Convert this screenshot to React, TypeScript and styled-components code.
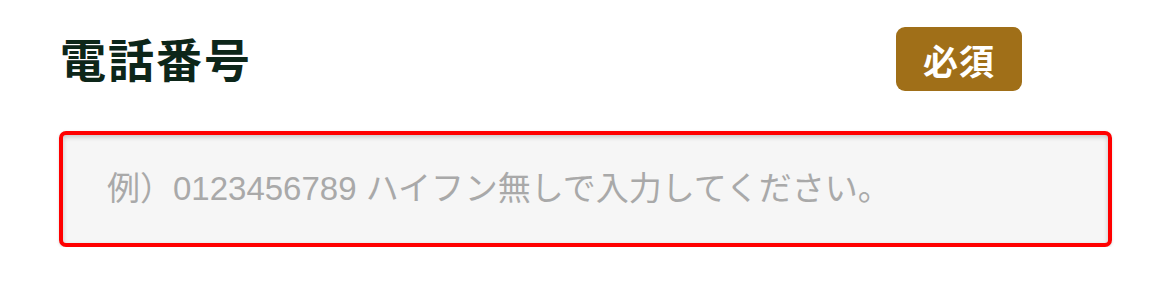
import styled, { createGlobalStyle } from 'styled-components'

const GlobalStyle = createGlobalStyle`
  html, body {
    margin: 0;
    padding: 0;
    background: #ffffff;
  }
  body {
    font-family: 'Noto Sans CJK JP', 'Noto Sans', sans-serif;
  }
`

const Field = styled.div`
  width: 1053px;
  padding: 27px 0 0 59px;
`

const FieldHeader = styled.div`
  display: flex;
  align-items: center;
  justify-content: space-between;
  width: 963px;
  height: 64px;
`

const FieldLabel = styled.label`
  font-size: 46px;
  font-weight: 700;
  line-height: 64px;
  color: #0d2619;
  letter-spacing: 2px;
  margin-left: 1px;
  margin-top: -4px;
`

const RequiredBadge = styled.span`
  display: flex;
  align-items: center;
  justify-content: center;
  width: 126px;
  height: 64px;
  border-radius: 9px;
  background: #a06f18;
  color: #ffffff;
  font-size: 35px;
  font-weight: 700;
  letter-spacing: 1px;
`

const PhoneInput = styled.input`
  display: block;
  box-sizing: border-box;
  width: 1053px;
  height: 116px;
  margin-top: 40px;
  padding: 0 0 0 44px;
  border: 4px solid #ff0000;
  border-radius: 7px;
  background: #f6f6f6;
  box-shadow: inset 0 2px 5px rgba(0, 0, 0, 0.2), 0 1px 3px rgba(0, 0, 0, 0.15);
  font-family: 'Liberation Sans', 'Noto Sans CJK JP', sans-serif;
  font-size: 33px;
  color: #333333;
  outline: none;

  &::placeholder {
    color: #a9a9a9;
  }
`

const App = () => {
  return (
    <>
      <GlobalStyle />
      <Field>
        <FieldHeader>
          <FieldLabel htmlFor="tel">電話番号</FieldLabel>
          <RequiredBadge>必須</RequiredBadge>
        </FieldHeader>
        <PhoneInput
          id="tel"
          type="tel"
          placeholder="例）0123456789 ハイフン無しで入力してください。"
        />
      </Field>
    </>
  )
}

export default App
